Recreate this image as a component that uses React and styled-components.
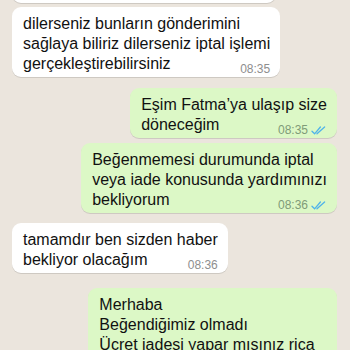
import React from "react"
import styled, { createGlobalStyle } from "styled-components"

const GlobalStyle = createGlobalStyle`
  html, body {
    margin: 0;
    padding: 0;
    background: #ebe5dd;
  }
  body {
    font-family: "Liberation Sans", Arial, sans-serif;
  }
`

const Screen = styled.div`
  width: 350px;
  height: 350px;
  overflow: hidden;
  background-color: #ebe5dd;
`

const Thread = styled.div`
  display: flex;
  flex-direction: column;
  margin-top: -27px;
  padding: 0 13px 0 12px;
`

const Bubble = styled.div`
  align-self: ${(p) => (p.$out ? "flex-end" : "flex-start")};
  background-color: ${(p) => (p.$out ? "#dcf8c6" : "#ffffff")};
  border-radius: 9px;
  box-shadow: 0 1px 0.5px rgba(0, 0, 0, 0.12);
  padding: 7px 10px 1px 11px;
  margin-top: ${(p) => p.$gap || 0}px;
  display: flex;
  flex-direction: column;
  color: #111;
`

const Text = styled.div`
  font-size: 16px;
  line-height: 20px;
  white-space: nowrap;
`

const Line = styled.span`
  display: block;
`

const Meta = styled.div`
  align-self: flex-end;
  display: flex;
  align-items: center;
  gap: 3px;
  height: 14px;
  margin-top: -12px;
  font-size: 12px;
  color: ${(p) => (p.$out ? "#7f9b78" : "#8e8e8e")};
  visibility: ${(p) => (p.$hidden ? "hidden" : "visible")};
`

const Ticks = () => (
  <svg width="16" height="11" viewBox="0 0 16 11" fill="none">
    <path d="M1 6.2 L3.6 8.8 L9.4 2" stroke="#4fb3ea" strokeWidth="1.3" strokeLinecap="round" strokeLinejoin="round" />
    <path d="M6 8.8 L13.6 2" stroke="#4fb3ea" strokeWidth="1.3" strokeLinecap="round" />
  </svg>
)

const messages = [
  { out: false, gap: 0, lines: ["ürünleriniz hazır durumda kargoya"], time: "08:34", hideMeta: true },
  {
    out: false,
    gap: 4,
    lines: [
      "dilerseniz bunların gönderimini",
      "sağlaya biliriz dilerseniz iptal işlemi",
      "gerçekleştirebilirsiniz",
    ],
    time: "08:35",
  },
  { out: true, gap: 11, lines: ["Eşim Fatma’ya ulaşıp size", "döneceğim"], time: "08:35", read: true },
  {
    out: true,
    gap: 5,
    lines: ["Beğenmemesi durumunda iptal", "veya iade konusunda yardımınızı", "bekliyorum"],
    time: "08:36",
    read: true,
  },
  { out: false, gap: 10, lines: ["tamamdır ben sizden haber", "bekliyor olacağım"], time: "08:36" },
  {
    out: true,
    gap: 15,
    lines: [
      "Merhaba",
      "Beğendiğimiz olmadı",
      "Ücret iadesi yapar mısınız rica",
      "ediyoruz, kargoya verebilir miyiz",
    ],
    time: "08:37",
    read: true,
  },
]

const App = () => {
  return (
    <Screen>
      <GlobalStyle />
      <Thread>
        {messages.map((m, i) => (
          <Bubble key={i} $out={m.out} $gap={m.gap}>
            <Text>
              {m.lines.map((l, j) => (
                <Line key={j}>{l}</Line>
              ))}
            </Text>
            <Meta $out={m.out} $hidden={m.hideMeta}>
              {m.time}
              {m.read && <Ticks />}
            </Meta>
          </Bubble>
        ))}
      </Thread>
    </Screen>
  )
}

export default App
